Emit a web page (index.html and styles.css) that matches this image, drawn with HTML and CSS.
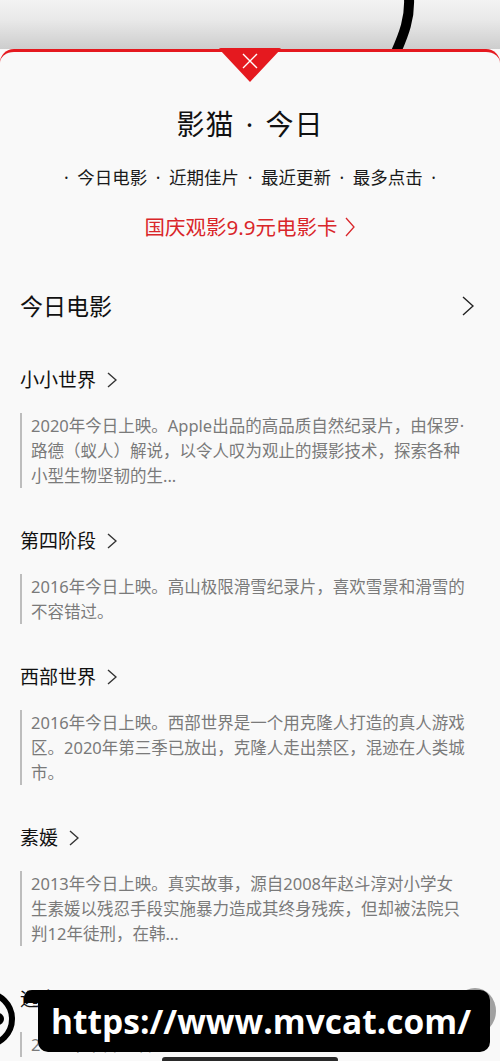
FILE: index.html
```html
<!DOCTYPE html>
<html lang="zh-CN">
<head>
<meta charset="utf-8">
<title>影猫 · 今日</title>
<link rel="stylesheet" href="styles.css">
</head>
<body>
<div class="topbar">
  <svg class="cord" width="40" height="52" viewBox="380 0 40 52"><path d="M409,-2 C410,18 404,34 396,52" fill="none" stroke="#000" stroke-width="10"/></svg>
</div>
<div class="sheet">
  <svg class="notch" width="64" height="36" viewBox="0 0 64 36">
    <path d="M3,0 L61,0 Q64,0 62,2 L32,34 L2,2 Q0,0 3,0 Z" fill="#e5191f"/>
    <path d="M25,6 L39,20 M39,6 L25,20" stroke="#fff" stroke-width="1.4" fill="none"/>
  </svg>
  <h1 class="title">影猫 · 今日</h1>
  <div class="nav">· 今日电影 · 近期佳片 · 最近更新 · 最多点击 ·</div>
  <div class="promo">国庆观影9.9元电影卡 <svg class="chev-red" width="10" height="20" viewBox="0 0 10 20"><path d="M1,1 L9,10 L1,19" fill="none" stroke="#d9262a" stroke-width="1.3"/></svg></div>

  <div class="section-head">
    <span>今日电影</span>
    <svg width="12" height="20" viewBox="0 0 12 20"><path d="M1,1 L11,10 L1,19" fill="none" stroke="#222" stroke-width="1.4"/></svg>
  </div>

  <ul class="list">
    <li class="item">
      <div class="item-head">小小世界 <svg class="chev" width="10" height="16" viewBox="0 0 10 16"><path d="M1,1 L9,8 L1,15" fill="none" stroke="#333" stroke-width="1.4"/></svg></div>
      <p class="desc">2020年今日上映。Apple出品的高品质自然纪录片，由保罗·路德（蚁人）解说，以令人叹为观止的摄影技术，探索各种小型生物坚韧的生...</p>
    </li>
    <li class="item">
      <div class="item-head">第四阶段 <svg class="chev" width="10" height="16" viewBox="0 0 10 16"><path d="M1,1 L9,8 L1,15" fill="none" stroke="#333" stroke-width="1.4"/></svg></div>
      <p class="desc">2016年今日上映。高山极限滑雪纪录片，喜欢雪景和滑雪的不容错过。</p>
    </li>
    <li class="item">
      <div class="item-head">西部世界 <svg class="chev" width="10" height="16" viewBox="0 0 10 16"><path d="M1,1 L9,8 L1,15" fill="none" stroke="#333" stroke-width="1.4"/></svg></div>
      <p class="desc">2016年今日上映。西部世界是一个用克隆人打造的真人游戏区。2020年第三季已放出，克隆人走出禁区，混迹在人类城市。</p>
    </li>
    <li class="item">
      <div class="item-head">素媛 <svg class="chev" width="10" height="16" viewBox="0 0 10 16"><path d="M1,1 L9,8 L1,15" fill="none" stroke="#333" stroke-width="1.4"/></svg></div>
      <p class="desc">2013年今日上映。真实故事，源自2008年赵斗淳对小学女生素媛以残忍手段实施暴力造成其终身残疾，但却被法院只判12年徒刑，在韩...</p>
    </li>
    <li class="item">
      <div class="item-head">远方 <svg class="chev" width="10" height="16" viewBox="0 0 10 16"><path d="M1,1 L9,8 L1,15" fill="none" stroke="#333" stroke-width="1.4"/></svg></div>
      <p class="desc">2019年今日上映。</p>
    </li>
  </ul>
</div>

<svg class="ring" width="40" height="80" viewBox="0 0 40 80">
  <circle cx="-14" cy="34" r="26" fill="none" stroke="#000" stroke-width="6"/>
  <circle cx="-2" cy="34" r="6" fill="#000"/>
</svg>
<div class="dot"></div>
<div class="url-tab"></div>
<div class="url">https://www.mvcat.com/</div>
<div class="home-bar"></div>
</body>
</html>
```

FILE: styles.css
```css
* { box-sizing: border-box; }
html, body {
  margin: 0;
  padding: 0;
  width: 500px;
  height: 1061px;
  overflow: hidden;
  background: #f9f9f9;
  font-family: "Noto Sans", "Noto Sans CJK SC", sans-serif;
}
.topbar {
  position: relative;
  height: 49px;
  background: linear-gradient(#f3f3f3 0%, #e9e9e9 40%, #cdcdcd 100%);
}
.cord {
  position: absolute;
  left: 380px;
  top: 0;
}
.sheet {
  position: relative;
  background: #f9f9f9;
  border-top: 3px solid #e5191f;
  border-radius: 14px 14px 0 0;
  padding: 52px 20px 0 20px;
}
.notch {
  position: absolute;
  left: 218px;
  top: -4px;
}
.title {
  margin: 0;
  text-align: center;
  font-size: 28px;
  line-height: 40px;
  font-weight: 400;
  color: #111;
  letter-spacing: 1px;
  word-spacing: 3px;
}
.nav {
  margin-top: 20px;
  text-align: center;
  font-size: 17.5px;
  line-height: 26px;
  color: #1a1a1a;
  word-spacing: 4px;
}
.promo {
  margin-top: 23px;
  text-align: center;
  font-size: 20.5px;
  line-height: 28px;
  color: #d9262a;
  display: flex;
  justify-content: center;
  align-items: center;
}
.chev-red { margin-left: 8px; }
.section-head {
  margin-top: 49px;
  display: flex;
  justify-content: space-between;
  align-items: center;
  font-size: 23px;
  line-height: 32px;
  color: #111;
  padding-right: 6px;
}
.list {
  list-style: none;
  margin: 46px 0 0 0;
  padding: 0;
}
.item { margin-bottom: 41px; }
.item-head {
  display: flex;
  align-items: center;
  font-size: 19px;
  line-height: 24px;
  color: #111;
}
.chev { margin-left: 11px; }
.desc {
  margin: 21px 14px 0 0;
  border-left: 2px solid #bdbdbd;
  padding-left: 9px;
  font-size: 16.5px;
  line-height: 25px;
  color: #7a7a7a;
}
.ring {
  position: absolute;
  left: 0;
  top: 985px;
}
.dot {
  position: absolute;
  left: 454px;
  top: 988px;
  width: 42px;
  height: 46px;
  border-radius: 50%;
  background: #8a8a8a;
  opacity: 0.8;
}
.url-tab {
  position: absolute;
  left: 24px;
  top: 990px;
  width: 30px;
  height: 13px;
  background: #000;
  border-radius: 8px 0 0 0;
}
.url {
  position: absolute;
  left: 38px;
  top: 990px;
  width: 452px;
  height: 62px;
  background: #000;
  border-radius: 10px;
  color: #fff;
  font-family: "Open Sans", "Liberation Sans", sans-serif;
  font-weight: 700;
  font-size: 33.5px;
  line-height: 62px;
  text-align: center;
  padding-right: 6px;
}
.home-bar {
  position: absolute;
  left: 162px;
  top: 1057px;
  width: 176px;
  height: 6px;
  border-radius: 3px;
  background: #2a2a2a;
}
```
